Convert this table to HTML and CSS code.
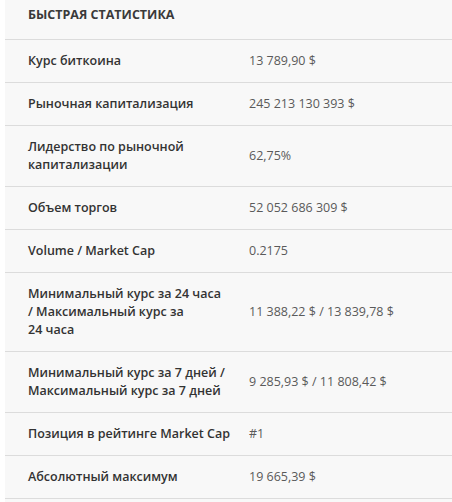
FILE: index.html
```html
<!DOCTYPE html>
<html lang="ru">
<head>
<meta charset="utf-8">
<link rel="stylesheet" href="styles.css">
</head>
<body>
<div class="stats">
  <div class="stats-title">Быстрая статистика</div>
  <div class="row"><div class="label">Курс биткоина</div><div class="value">13 789,90 $</div></div>
  <div class="row"><div class="label">Рыночная капитализация</div><div class="value">245 213 130 393 $</div></div>
  <div class="row"><div class="label">Лидерство по рыночной капитализации</div><div class="value">62,75%</div></div>
  <div class="row"><div class="label">Объем торгов</div><div class="value">52 052 686 309 $</div></div>
  <div class="row"><div class="label">Volume / Market Cap</div><div class="value">0.2175</div></div>
  <div class="row"><div class="label">Минимальный курс за 24 часа / Максимальный курс за 24&nbsp;часа</div><div class="value">11 388,22 $ / 13 839,78 $</div></div>
  <div class="row"><div class="label">Минимальный курс за 7 дней / Максимальный курс за 7 дней</div><div class="value">9 285,93 $ / 11 808,42 $</div></div>
  <div class="row"><div class="label label-nowrap">Позиция в рейтинге Market Cap</div><div class="value">#1</div></div>
  <div class="row"><div class="label">Абсолютный максимум</div><div class="value">19 665,39 $</div></div>
</div>
</body>
</html>
```
FILE: styles.css
```css
html, body {
  margin: 0;
  padding: 0;
  background: #ffffff;
}
body {
  font-family: "Open Sans", "Noto Sans", sans-serif;
  font-size: 12.5px;
  line-height: 18px;
}
.stats {
  margin-left: 5px;
  background: #f8f8f8;
  min-height: 502px;
}
.stats-title {
  padding: 6px 23px 15px;
  font-weight: 700;
  text-transform: uppercase;
  color: #3a3a3a;
  border-bottom: 1px solid #dcdcdc;
}
.row {
  display: grid;
  grid-template-columns: 244px 1fr;
  border-bottom: 1px solid #dcdcdc;
}
.label {
  padding: 12px 20px 12px 23px;
  font-weight: 600;
  color: #333333;
}
.label-nowrap {
  white-space: nowrap;
}
.value {
  padding: 12px 0;
  display: flex;
  align-items: center;
  color: #5a5a5a;
}
```
